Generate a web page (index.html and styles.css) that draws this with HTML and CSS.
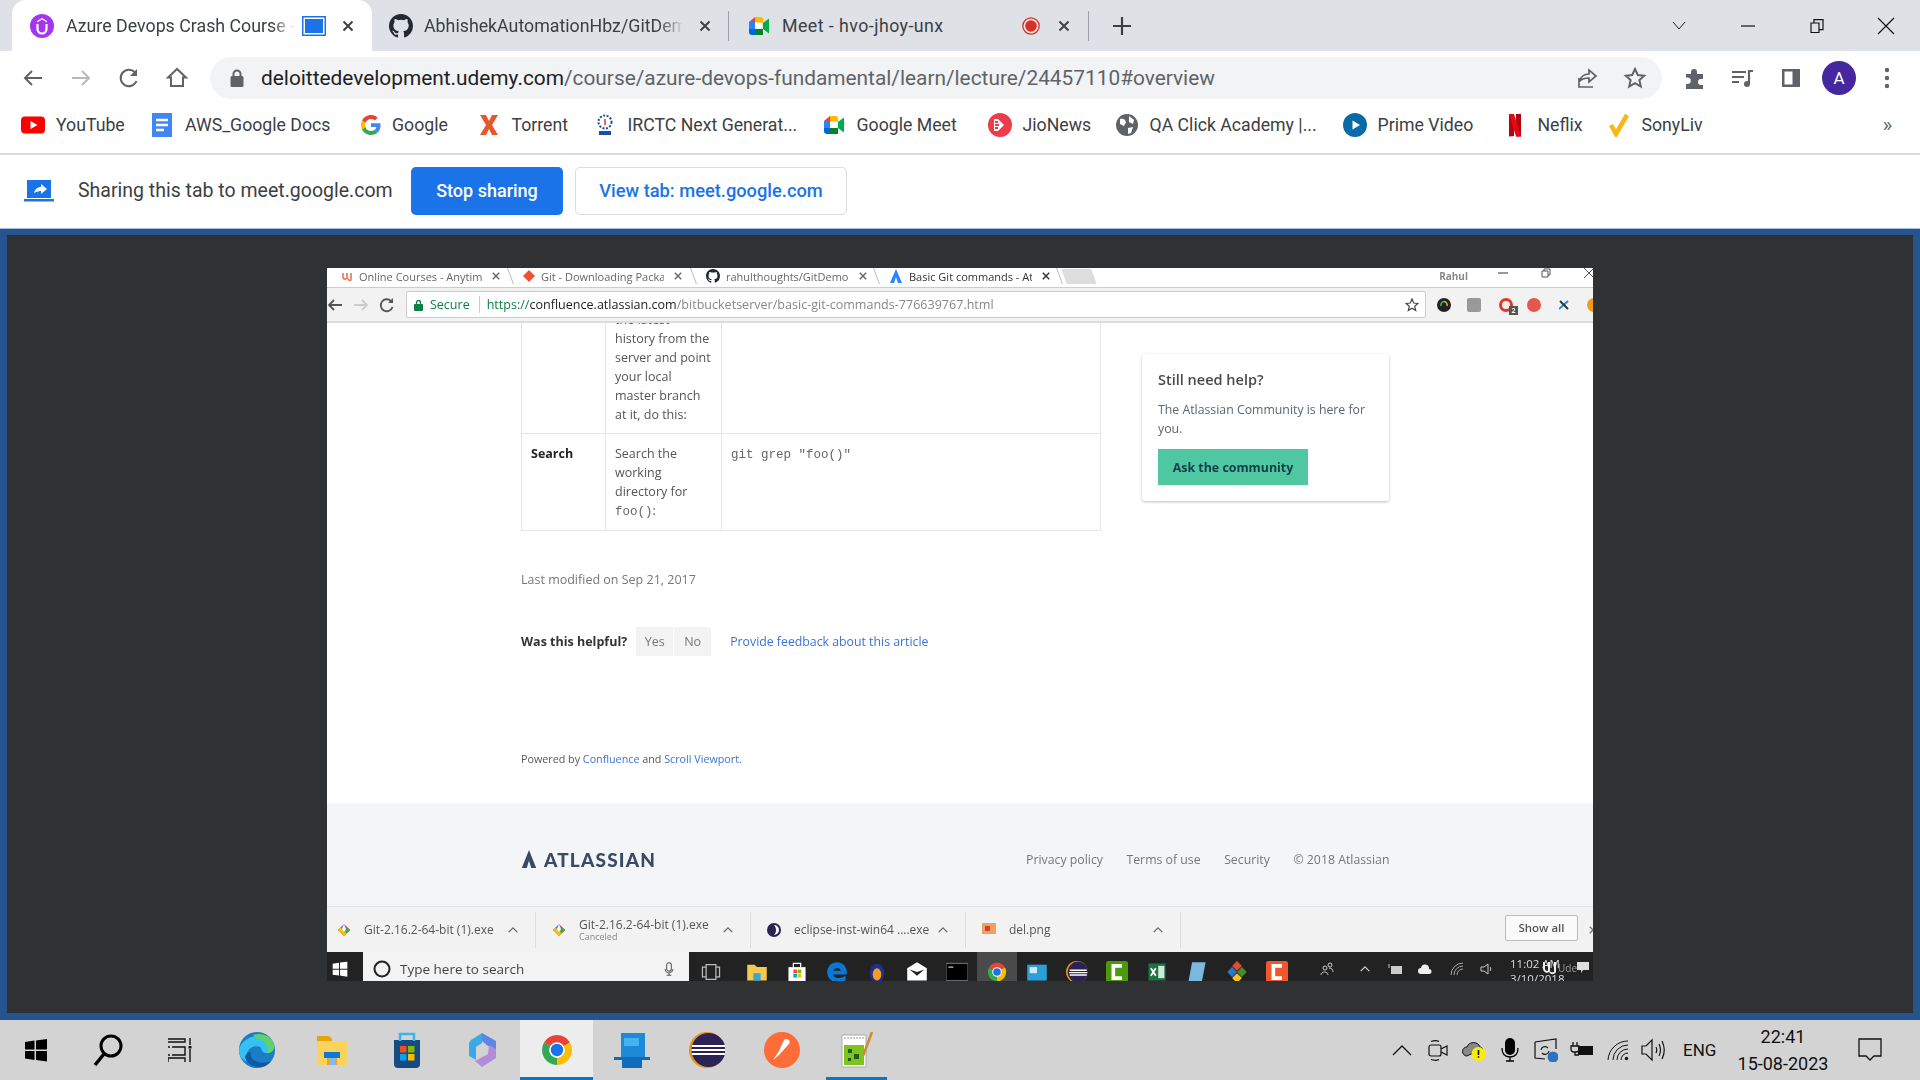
FILE: index.html
```html
<!DOCTYPE html>
<html lang="en">
<head>
<meta charset="utf-8">
<title>Azure Devops Crash Course</title>
<link rel="stylesheet" href="styles.css">
</head>
<body>
<svg class="defs" aria-hidden="true">
  <symbol id="meet" viewBox="0 0 24 24"><path fill="#00832d" d="M8 15h8v6H5l3-6z"/><path fill="#0066da" d="M2 8v10a3 3 0 0 0 3 3h3v-6H8L5 12z"/><path fill="#e94235" d="M8 3 2 8h6z"/><path fill="#2684fc" d="M2 8h6v7H2z"/><path fill="#ffba00" d="M8 3h6a2 2 0 0 1 2 2v4h-8z"/><path fill="#00ac47" d="m16 9 6-4.500v15L16 15z"/><path fill="#fff" d="M8 8.500h6.500v6H8z"/></symbol>
  <symbol id="github" viewBox="0 0 16 16"><path fill="#24292f" d="M8 0C3.580 0 0 3.580 0 8c0 3.540 2.290 6.530 5.470 7.590.4.070.55-.17.55-.38v-1.490c-2.010.37-2.530-.49-2.690-.94-.09-.23-.48-.94-.82-1.130-.28-.15-.68-.52-.01-.53.63-.01 1.080.58 1.230.82.720 1.210 1.870.87 2.330.66.070-.52.280-.87.510-1.070-1.780-.2-3.640-.89-3.640-3.950 0-.87.310-1.590.820-2.150-.08-.2-.36-1.020.08-2.120 0 0 .670-.21 2.200.82a7.600 7.600 0 0 1 4 0c1.530-1.040 2.200-.82 2.200-.82.440 1.100.160 1.920.080 2.120.510.560.820 1.270.820 2.150 0 3.070-1.870 3.750-3.650 3.950.290.250.540.730.540 1.480v2.200c0 .21.150.46.550.38A8 8 0 0 0 16 8c0-4.420-3.580-8-8-8z"/></symbol>
  <symbol id="chrome" viewBox="0 0 48 48"><path fill="#ea4335" d="M24 24 41.300 14A20 20 0 0 0 6.700 14z"/><path fill="#34a853" d="M24 24 6.700 14A20 20 0 0 0 24 44z"/><path fill="#fbbc04" d="M24 24V44A20 20 0 0 0 41.300 14z"/><circle cx="24" cy="24" r="10.500" fill="#fff"/><circle cx="24" cy="24" r="8.300" fill="#1a73e8"/></symbol>
  <symbol id="x" viewBox="0 0 14 14"><path fill="none" stroke="currentColor" stroke-width="2" d="m2.500 2.500 9 9m0-9-9 9"/></symbol>
  <symbol id="winlogo" viewBox="0 0 24 24"><path fill="currentColor" d="m1 4 9.500-1.400v8.900H1zm11-1.600L23 1v10.500H12zM1 13h9.500v8.900L1 20.500zm11 0h11v10.500l-11-1.600z"/></symbol>
  <symbol id="chev" viewBox="0 0 14 14"><path fill="none" stroke="currentColor" stroke-width="1.500" d="m2 9.500 5-5 5 5"/></symbol>
  <symbol id="gitlogo" viewBox="0 0 16 16"><path fill="#4285f4" d="M8 1 1 8l3 3z"/><path fill="#ea4335" d="m8 1 7 7-3 3z"/><path fill="#34a853" d="m12 5 3 3-7 7-3-3z"/><path fill="#fbbc04" d="M4 5 1 8l7 7 3-3z"/><path fill="#fff" d="M6.500 6.500h3v3h-3z"/></symbol>
</svg>

<div class="tabstrip">
  <div class="tab tab-active">
    <svg class="i24" viewBox="0 0 24 24"><circle cx="12" cy="12" r="12" fill="#a435f0"/><path fill="none" stroke="#fff" stroke-width="2.200" d="M7.500 10v5a4.500 4.500 0 0 0 9 0v-5"/><path fill="#fff" d="m12 4 5 3v1.500l-5-3-5 3V7z"/></svg>
    <span class="tab-title tt-a">Azure Devops Crash Course -</span>
    <svg class="tab-media" viewBox="0 0 24 20"><rect x=".75" y=".75" width="22.500" height="18.500" fill="#fff" stroke="#1a73e8" stroke-width="1.500"/><rect x="3" y="3" width="18" height="14" fill="#1a73e8"/></svg>
    <svg class="i14"><use href="#x"/></svg>
  </div>
  <div class="tab tab-b">
    <svg class="i24"><use href="#github"/></svg>
    <span class="tab-title tt-b">AbhishekAutomationHbz/GitDemo</span>
    <svg class="i14"><use href="#x"/></svg>
  </div>
  <i class="tab-sep"></i>
  <div class="tab tab-c">
    <svg class="i24"><use href="#meet"/></svg>
    <span class="tab-title tt-c">Meet - hvo-jhoy-unx</span>
    <svg class="i18" viewBox="0 0 18 18"><circle cx="9" cy="9" r="8.200" fill="none" stroke="#d93025" stroke-width="1.300"/><circle cx="9" cy="9" r="5.800" fill="#d93025"/></svg>
    <svg class="i14"><use href="#x"/></svg>
  </div>
  <i class="tab-sep"></i>
  <svg class="newtab" viewBox="0 0 20 20"><path fill="none" stroke="#3c4043" stroke-width="2.200" d="M10 1v18M1 10h18"/></svg>
  <div class="winctl">
    <span class="wc"><svg class="i14" viewBox="0 0 14 14"><path fill="none" stroke="#222" d="m1 3 6 7 6-7"/></svg></span>
    <span class="wc"><svg class="i14" viewBox="0 0 14 14"><path stroke="#111" stroke-width="1.200" d="M0 7h14"/></svg></span>
    <span class="wc"><svg class="i14" viewBox="0 0 14 14"><path fill="none" stroke="#111" stroke-width="1.200" d="M1 4h8v9.500H1zM4 4V.6h9v10H9"/></svg></span>
    <span class="wc"><svg class="i18" viewBox="0 0 18 18"><path fill="none" stroke="#111" stroke-width="1.200" d="m1 1 16 16m0-16L1 17"/></svg></span>
  </div>
</div>

<div class="toolbar">
  <span class="tb"><svg class="i24" viewBox="0 0 24 24"><path fill="none" stroke="#5f6368" stroke-width="2" d="M21 12H4m7-7-7 7 7 7"/></svg></span>
  <span class="tb"><svg class="i24" viewBox="0 0 24 24"><path fill="none" stroke="#b7b9bd" stroke-width="2" d="M3 12h17m-7-7 7 7-7 7"/></svg></span>
  <span class="tb"><svg class="i24" viewBox="0 0 24 24"><path fill="none" stroke="#5f6368" stroke-width="2" d="M19.500 15A8.200 8.200 0 1 1 18 6.500"/><path fill="#5f6368" d="M20 3v7h-7z"/></svg></span>
  <span class="tb"><svg class="i24" viewBox="0 0 24 24"><path fill="none" stroke="#5f6368" stroke-width="2" d="M12 3 3 11.500h3V20h12v-8.500h3z"/></svg></span>
  <div class="omni">
    <svg class="lock" viewBox="0 0 16 20"><path fill="none" stroke="#5f6368" stroke-width="2" d="M4.500 9V6a3.500 3.500 0 0 1 7 0v3"/><rect x="1.500" y="8" width="13" height="11" rx="1.500" fill="#5f6368"/></svg>
    <span class="url"><span class="url-host">deloittedevelopment.udemy.com</span>/course/azure-devops-fundamental/learn/lecture/24457110#overview</span>
    <span class="tb"><svg class="i24" viewBox="0 0 24 24"><path fill="none" stroke="#5f6368" stroke-width="1.700" d="M4 12v9h14M5 15c1-5 5-7 9-7V4l7 6-7 6v-4c-4 0-7 1-9 3z"/></svg></span>
    <span class="tb"><svg class="i24" viewBox="0 0 24 24"><path fill="none" stroke="#5f6368" stroke-width="2" d="m12 3 2.800 6 6.400.7-4.800 4.400 1.400 6.400L12 17.200l-5.800 3.300 1.400-6.400-4.800-4.400L9.200 9z"/></svg></span>
  </div>
  <div class="tb-right">
    <span class="tb"><svg class="i24" viewBox="0 0 24 24"><path fill="#5f6368" d="M3 8h5V6a3 3 0 0 1 6 0v2h6v5h-2a3 3 0 0 0 0 6h2v4H3v-5h1.500a3.200 3.200 0 0 0 0-6.400H3z"/></svg></span>
    <span class="tb"><svg class="i24" viewBox="0 0 24 24"><path fill="none" stroke="#5f6368" stroke-width="2.200" d="M1 6h14M1 11h12M1 16h7"/><circle cx="16" cy="18" r="3" fill="#5f6368"/><path fill="none" stroke="#5f6368" stroke-width="2.200" d="M18 18V5h4"/></svg></span>
    <span class="tb"><svg class="i24" viewBox="0 0 24 24"><rect x="3" y="3" width="18" height="18" fill="#5f6368"/><rect x="5.500" y="5.500" width="8" height="13" fill="#fff"/></svg></span>
    <span class="tb"><span class="avatar">A</span></span>
    <span class="tb"><svg class="i24" viewBox="0 0 24 24"><circle cx="12" cy="4" r="2.200" fill="#5f6368"/><circle cx="12" cy="12" r="2.200" fill="#5f6368"/><circle cx="12" cy="20" r="2.200" fill="#5f6368"/></svg></span>
  </div>
</div>

<div class="bookmarks">
  <a class="bm bm-1"><svg class="i24" viewBox="0 0 24 24"><rect y="3.500" width="24" height="17" rx="4" fill="#f00"/><path fill="#fff" d="m9.500 8 7 4-7 4z"/></svg>YouTube</a>
  <a class="bm bm-2"><svg class="i24" viewBox="0 0 24 24"><path fill="#4285f4" d="M2 0h20v24H2a1 1 0 0 1 0 0z"/><path stroke="#fff" stroke-width="2.400" d="M6 7h12M6 12h12M6 17h8"/></svg>AWS_Google Docs</a>
  <a class="bm bm-3"><svg class="i20" viewBox="0 0 48 48"><path fill="#ea4335" d="M24 9.500c3.500 0 6.700 1.200 9.200 3.600l6.800-6.800C35.900 2.400 30.500 0 24 0 14.600 0 6.500 5.400 2.600 13.200l8 6.200C12.400 13.700 17.700 9.500 24 9.500z"/><path fill="#4285f4" d="M46.900 24.500c0-1.600-.1-3.100-.4-4.500H24v9h12.900c-.6 3-2.200 5.500-4.800 7.200l7.700 6c4.500-4.200 7.100-10.300 7.100-17.700z"/><path fill="#fbbc05" d="M10.500 28.600A14.500 14.500 0 0 1 10.500 19.400l-8-6.200a24 24 0 0 0 0 21.600z"/><path fill="#34a853" d="M24 48c6.500 0 11.900-2.100 15.900-5.800l-7.700-6c-2.200 1.400-4.900 2.300-8.200 2.300-6.300 0-11.600-4.200-13.500-9.900l-8 6.200C6.500 42.600 14.600 48 24 48z"/></svg>Google</a>
  <a class="bm bm-4"><svg class="i24" viewBox="0 0 24 24"><path fill="#e8572a" d="M3 2h6l3 6 3-6h6l-6 10 6 10h-6l-3-6-3 6H3l6-10z"/></svg>Torrent</a>
  <a class="bm bm-5"><svg class="i24" viewBox="0 0 24 24"><circle cx="12" cy="9" r="6.500" fill="none" stroke="#1a4fa0" stroke-width="2" stroke-dasharray="2 1.500"/><path stroke="#d9342b" stroke-width="1.500" d="M12 6v6"/><path stroke="#1a4fa0" stroke-width="4" d="M6 20h12"/></svg>IRCTC Next Generat...</a>
  <a class="bm bm-6"><svg class="i24"><use href="#meet"/></svg>Google Meet</a>
  <a class="bm bm-7"><svg class="i24" viewBox="0 0 24 24"><circle cx="12" cy="12" r="12" fill="#ee3b4a"/><path fill="#fff" d="M6 6h4l6 6-6 6H6zM7 8v2h3V8zm0 3v2h4v-2zm0 3v2h3v-2z"/></svg>JioNews</a>
  <a class="bm bm-8"><svg class="i24" viewBox="0 0 24 24"><circle cx="12" cy="12" r="11" fill="#5f6368"/><path fill="#fff" d="M5 6c3-1 5 0 6 3l-2 4-4-2zm9-3 5 4-1 4-4-2zm-1 12 5-1-2 6-3 1z"/></svg>QA Click Academy |...</a>
  <a class="bm bm-9"><svg class="i24" viewBox="0 0 24 24"><circle cx="12" cy="12" r="12" fill="#0a6aa8"/><path fill="#fff" d="M9.500 7.500 17 12l-7.500 4.500z"/></svg>Prime Video</a>
  <a class="bm bm-10"><svg class="i24" viewBox="0 0 24 24"><path fill="#b1060f" d="M6 1h5v22l-5 .5zM13 1h5v22.500h-5z"/><path fill="#e50914" d="M6 1h5l7 22.500h-5z"/></svg>Neflix</a>
  <a class="bm"><svg class="i24" viewBox="0 0 24 24"><path fill="none" stroke="#f9b715" stroke-width="4.500" d="m4 12 5 9L20 2"/></svg>SonyLiv</a>
  <span class="bm-more">»</span>
</div>

<div class="infobar">
  <svg class="cast" viewBox="0 0 30 22"><path fill="#1a73e8" d="M3 0h24v18H3zM0 19h30v2.500H0z"/><path fill="#fff" d="M10 13c1-4 4-6 7-6V4l6 5-6 5v-3c-3 0-5 1-7 2z"/></svg>
  <span class="info-text">Sharing this tab to meet.google.com</span>
  <button class="btn-stop">Stop sharing</button>
  <button class="btn-view">View tab: meet.google.com</button>
</div>

<div class="stage">
  <div class="dark">
    <div class="video">
      <div class="v-tabs">
        <div class="vt">
          <svg class="v12" viewBox="0 0 12 12"><path fill="none" stroke="#e8836b" stroke-width="1.800" d="M2 3v4a2 2 0 0 0 4 0V3m1 5a2 2 0 0 0 3 2V3"/></svg>
          <span class="vt-title">Online Courses - Anytim</span>
          <svg class="v10"><use href="#x"/></svg>
        </div>
        <i class="vsep"></i>
        <div class="vt">
          <svg class="v12" viewBox="0 0 12 12"><path fill="#f05133" d="M6 0 12 6 6 12 0 6z"/></svg>
          <span class="vt-title">Git - Downloading Packa</span>
          <svg class="v10"><use href="#x"/></svg>
        </div>
        <i class="vsep"></i>
        <div class="vt">
          <svg class="v14"><use href="#github"/></svg>
          <span class="vt-title">rahulthoughts/GitDemo</span>
          <svg class="v10"><use href="#x"/></svg>
        </div>
        <i class="vsep"></i>
        <div class="vt vt-on">
          <svg class="v14" viewBox="0 0 14 14"><path fill="#2684ff" d="M7 0 13 14H9L7 8 5 14H1z"/></svg>
          <span class="vt-title">Basic Git commands - At</span>
          <svg class="v10"><use href="#x"/></svg>
        </div>
        <i class="vsep"></i>
        <i class="vnew"></i>
        <span class="v-user">Rahul</span>
        <span class="v-win"><svg class="v10" viewBox="0 0 10 10"><path stroke="#555" stroke-width="1.200" d="M0 5h10"/></svg></span>
        <span class="v-win"><svg class="v10" viewBox="0 0 10 10"><path fill="none" stroke="#555" d="M1 3h6v6H1zM3 3V1h6v6H7"/></svg></span>
        <span class="v-win"><svg class="v10" viewBox="0 0 10 10"><path stroke="#555" d="m0 0 10 10M10 0 0 10"/></svg></span>
      </div>
      <div class="v-bar">
        <svg class="v16" viewBox="0 0 16 16"><path fill="none" stroke="#555" stroke-width="1.800" d="M15 8H2m5-5L2 8l5 5"/></svg>
        <svg class="v16" viewBox="0 0 16 16"><path fill="none" stroke="#ccc" stroke-width="1.800" d="M1 8h13M9 3l5 5-5 5"/></svg>
        <svg class="v16" viewBox="0 0 16 16"><path fill="none" stroke="#555" stroke-width="1.800" d="M13.500 10A6 6 0 1 1 12 4"/><path fill="#555" d="M14 1v5H9z"/></svg>
        <div class="v-omni">
          <svg class="v-lock" viewBox="0 0 9 12"><path fill="none" stroke="#0b8043" stroke-width="1.300" d="M2.500 6V3.500a2 2 0 0 1 4 0V6"/><rect y="5" width="9" height="7" rx="1" fill="#0b8043"/></svg>
          <span class="v-secure">Secure</span>
          <span class="v-url"><span class="v-https">https://</span><span class="v-host">confluence.atlassian.com</span>/bitbucketserver/basic-git-commands-776639767.html</span>
          <svg class="v14" viewBox="0 0 14 14"><path fill="none" stroke="#444" stroke-width="1.200" d="m7 1 1.700 4 4.300.4-3.300 2.900 1 4.200L7 10.300l-3.700 2.200 1-4.200L1 5.400 5.300 5z"/></svg>
        </div>
        <div class="v-exts">
          <span class="ve"><svg class="v14" viewBox="0 0 14 14"><circle cx="7" cy="7" r="7" fill="#222"/><path fill="none" stroke="#3bbf6a" stroke-width="1.500" d="M4 8a3.500 3.500 0 0 1 3-4.500"/><path fill="none" stroke="#e2b93b" stroke-width="1.500" d="M7 3.500A3.500 3.500 0 0 1 10 8"/></svg></span>
          <span class="ve"><i class="ext ext-sq"></i></span>
          <span class="ve"><i class="ext ext-op"></i><b class="badge">2</b></span>
          <span class="ve"><i class="ext ext-red"></i></span>
          <span class="ve"><svg class="v10" viewBox="0 0 10 10"><path stroke="#1a8fe0" stroke-width="2" d="M0 9 9 1"/><path stroke="#333" stroke-width="2" d="m1 1 8 8"/></svg></span>
          <span class="ve"><i class="ext ext-or"></i></span>
        </div>
      </div>
      <div class="v-page">
        <div class="v-main">
          <div class="tbl">
            <div class="cell cell-top"></div>
            <div class="cell cell-top cell-clip">the latest<br>history from the<br>server and point<br>your local<br>master branch<br>at it, do this:</div>
            <div class="cell cell-top cell-last"></div>
            <div class="cell cell-bot cell-head">Search</div>
            <div class="cell cell-bot">Search the<br>working<br>directory for<br><code class="code">foo()</code>:</div>
            <div class="cell cell-bot cell-last"><code class="code">git grep "foo()"</code></div>
          </div>
          <p class="mod">Last modified on Sep 21, 2017</p>
          <div class="helpful">
            <b class="help-q">Was this helpful?</b>
            <span class="yn">Yes</span><span class="yn">No</span>
            <a class="help-link">Provide feedback about this article</a>
          </div>
          <p class="powered">Powered by <a class="lnk">Confluence</a> and <a class="lnk">Scroll Viewport.</a></p>
        </div>
        <aside class="card">
          <h3 class="card-h">Still need help?</h3>
          <p class="card-p">The Atlassian Community is here for you.</p>
          <button class="card-btn">Ask the community</button>
        </aside>
      </div>
      <div class="v-foot">
        <div class="logo">
          <svg class="logo-i" viewBox="0 0 16 20"><path fill="#3a4a66" d="M8 0 16 20H10.500L8 12l-2.500 8H0z"/></svg>
          <span>ATLASSIAN</span>
        </div>
        <div class="foot-links"><span>Privacy policy</span><span>Terms of use</span><span>Security</span><span>© 2018 Atlassian</span></div>
      </div>
      <div class="v-shelf">
        <div class="dl dl-first"><svg class="v14"><use href="#gitlogo"/></svg><span class="dl-name">Git-2.16.2-64-bit (1).exe</span><svg class="v12 dl-chev"><use href="#chev"/></svg></div>
        <div class="dl"><svg class="v14"><use href="#gitlogo"/></svg><span class="dl-name dl-two">Git-2.16.2-64-bit (1).exe<small class="dl-sub">Canceled</small></span><svg class="v12 dl-chev"><use href="#chev"/></svg></div>
        <div class="dl"><svg class="v14" viewBox="0 0 14 14"><circle cx="7" cy="7" r="7" fill="#2c2255"/><path fill="#fff" d="M7 2a5 5 0 0 1 0 10 7 7 0 0 0 0-10z"/></svg><span class="dl-name">eclipse-inst-win64 ....exe</span><svg class="v12 dl-chev"><use href="#chev"/></svg></div>
        <div class="dl"><svg class="v14" viewBox="0 0 14 14"><rect width="14" height="11" fill="#f0a060"/><path fill="#c8452a" d="M3 3h5v5H3z"/></svg><span class="dl-name">del.png</span><svg class="v12 dl-chev"><use href="#chev"/></svg></div>
        <button class="show-all">Show all</button>
        <svg class="v10 dl-x"><use href="#x"/></svg>
      </div>
      <div class="v-task">
        <span class="vw"><svg class="v16 c-white"><use href="#winlogo"/></svg></span>
        <div class="v-search">
          <svg class="v18" viewBox="0 0 18 18"><circle cx="9" cy="9" r="7.500" fill="none" stroke="#222" stroke-width="2"/></svg>
          <span class="v-search-t">Type here to search</span>
          <svg class="v14" viewBox="0 0 14 18"><rect x="4" y="1" width="6" height="11" rx="3" fill="none" stroke="#555" stroke-width="1.300"/><path fill="none" stroke="#555" stroke-width="1.300" d="M2 9a5 5 0 0 0 10 0M7 14v3M4 17h6"/></svg>
        </div>
        <span class="vi vi-tv"><svg viewBox="0 0 18 18"><path fill="none" stroke="#bbb" d="M5 3h8v12H5zM5 5H2v8h3M13 5h3v8h-3"/></svg></span>
        <span class="vi"><svg viewBox="0 0 18 18"><path fill="#f5c94e" d="M1 3h6l2 2h8v11H1z"/><path fill="#3ba4d8" d="M6 10h6v6H6z"/></svg></span>
        <span class="vi"><svg viewBox="0 0 18 18"><path fill="#fff" d="M2 5h14v12H2z"/><path fill="#f25022" d="M6 7h3v3H6z"/><path fill="#7fba00" d="M9.500 7h3v3h-3z"/><path fill="#00a4ef" d="M6 10.500h3v3H6z"/><path fill="#ffb900" d="M9.500 10.500h3v3h-3z"/><path fill="none" stroke="#fff" d="M6 5V2h6v3"/></svg></span>
        <span class="vi"><svg viewBox="0 0 18 18"><path fill="#0a78d7" d="M1 9C1 4 5 1 9 1s8 3 8 8v2H6c0 3 5 4 10 1v4c-7 3-15 1-15-7zm5-1h6c0-3-5-3-6 0z"/></svg></span>
        <span class="vi"><svg viewBox="0 0 18 18"><ellipse cx="9" cy="10" rx="6" ry="8" fill="#1e2f8c"/><ellipse cx="9" cy="11" rx="3.500" ry="5" fill="#f59b1d"/></svg></span>
        <span class="vi"><svg viewBox="0 0 18 18"><path fill="#fff" d="M1 6 9 1l8 5v10H1z"/><path fill="#222" d="m3 7 6 2 6-2-6 5z"/></svg></span>
        <span class="vi"><svg viewBox="0 0 18 18"><rect y="2" width="18" height="14" fill="#000" stroke="#666"/><path stroke="#ccc" d="M2 5h4"/></svg></span>
        <span class="vi vi-on"><svg><use href="#chrome"/></svg></span>
        <span class="vi"><svg viewBox="0 0 18 18"><rect x="1" y="3" width="16" height="13" fill="#2a9fd8"/><rect x="3" y="5" width="6" height="5" fill="#cfeafa"/></svg></span>
        <span class="vi"><svg viewBox="0 0 18 18"><circle cx="9" cy="9" r="9" fill="#e8941a"/><circle cx="9.800" cy="9" r="8.500" fill="#2c2255"/><path stroke="#fff" stroke-width="1.200" d="M3 7.500h14M2.500 9.500h15M3 11.500h14"/></svg></span>
        <span class="vi"><svg viewBox="0 0 18 18"><rect width="18" height="18" rx="2" fill="#4a9a0c"/><path fill="none" stroke="#fff" stroke-width="3" d="M13 4H6v10h7"/></svg></span>
        <span class="vi"><svg viewBox="0 0 18 18"><rect x="2" y="2" width="14" height="14" fill="#1f7244"/><rect x="10" y="4" width="5" height="10" fill="#cfe8d8"/><path stroke="#fff" stroke-width="1.500" d="m4 6 4 6m0-6-4 6"/></svg></span>
        <span class="vi"><svg viewBox="0 0 18 18"><path fill="#7ab8e0" d="M5 1h11l-3 16H2z"/></svg></span>
        <span class="vi"><svg viewBox="0 0 18 18"><path fill="#e04e39" d="M9 0 13 4 9 8 5 4z"/><path fill="#4b8b2b" d="m13 5 4 4-4 4-4-4z"/><path fill="#2979c9" d="m5 5 4 4-4 4-4-4z"/><path fill="#f5c518" d="m9 10 4 4-4 4-4-4z"/></svg></span>
        <span class="vi"><svg viewBox="0 0 18 18"><rect width="18" height="18" rx="2" fill="#f0572d"/><path fill="none" stroke="#fff" stroke-width="3" d="M13 4H6v10h7"/></svg></span>
        <span class="vt-c vt-c-1"><svg class="v14" viewBox="0 0 14 14"><circle cx="5" cy="6" r="2" fill="none" stroke="#ccc"/><circle cx="10" cy="3" r="2" fill="none" stroke="#ccc"/><path fill="none" stroke="#ccc" d="M1 13c0-4 7-4 7 0M9 6c3 0 4 2 4 4"/></svg></span>
        <span class="vt-c vt-c-2"><svg class="v12 c-grey"><use href="#chev"/></svg></span>
        <span class="vt-c"><svg class="v14" viewBox="0 0 14 14"><rect x="3" y="4" width="11" height="8" fill="#ccc"/><path stroke="#ccc" d="M1 2v4"/></svg></span>
        <span class="vt-c"><svg class="v14" viewBox="0 0 14 14"><path fill="#eee" d="M3 12a3 3 0 0 1 0-6 4 4 0 0 1 8 1 2.500 2.500 0 0 1 0 5z"/></svg></span>
        <span class="vt-c vt-c-3"><svg class="v14" viewBox="0 0 14 14"><path fill="none" stroke="#aaa" d="M1 13A12 12 0 0 1 13 1M4 13a9 9 0 0 1 9-9M7 13a6 6 0 0 1 6-6"/></svg></span>
        <span class="vt-c"><svg class="v14" viewBox="0 0 14 14"><path fill="none" stroke="#ccc" d="M1 5h3l4-3v10L4 9H1zM10 5c1 1 1 3 0 4"/></svg></span>
        <span class="v-clock">11:02 AM<br>3/10/2018</span>
        <span class="v-wm"><svg class="v14" viewBox="0 0 14 14"><path fill="none" stroke="#eee" stroke-width="2" d="M2 1v7a3 3 0 0 0 5 2V1m1 10a3 3 0 0 0 5 0V1"/></svg>Ude</span>
        <span class="v-note"><svg class="v14" viewBox="0 0 14 14"><path fill="#ddd" d="M1 2h12v8H7l-2 3v-3H1z"/></svg></span>
      </div>
    </div>
  </div>
</div>

<div class="taskbar">
  <span class="tk tk-s"><svg class="i24 c-black"><use href="#winlogo"/></svg></span>
  <span class="tk tk-s"><svg class="i34" viewBox="0 0 34 34"><circle cx="20" cy="13" r="10" fill="none" stroke="#000" stroke-width="3"/><path stroke="#000" stroke-width="3.500" d="m13 21-9 11"/></svg></span>
  <span class="tk tk-s"><svg class="i24" viewBox="0 0 24 24"><path fill="none" stroke="#111" stroke-width="1.400" d="M0 1h17v3H0M4 9h13v8H4M0 9h2m-2 8h2M0 24v-4h17v4M22 0v7m0 4v13"/><rect x="20.500" y="8" width="3" height="2.500" fill="#111"/></svg></span>
  <span class="tk tk-edge"><svg class="i36" viewBox="0 0 36 36"><circle cx="18" cy="18" r="18" fill="#1b7cc8"/><path fill="#35c1f1" d="M0 18C2 4 30-4 35 13c1 6-4 8-8 8-5 0-4-5-6-6C12 11 4 22 8 30 2 27 0 23 0 18z"/><path fill="#5fd36a" d="M14 3c9-3 19 1 21 10 1 6-4 9-8 8 3-1 2-9-3-12-4-2-7-3-10-6z"/><path fill="#0c59a4" d="M6 25c2 8 12 12 20 9 2-1 5-3 6-5-4 2-12 3-17-1-3-2-4-5-3-8-3 0-5 2-6 5z"/></svg></span>
  <span class="tk"><svg class="i36" viewBox="0 0 36 36"><path fill="#e5a50a" d="M3 4h12l3 3v5H3z"/><path fill="#fbd35a" d="M3 9h30v24H3z"/><path fill="#0f78d4" d="M10 20h16v6H10z"/><path fill="#f0a030" d="M13 26h10v7H13z"/><path fill="#7fbce8" d="M15 26h6v7h-6z"/></svg></span>
  <span class="tk"><svg class="i36" viewBox="0 0 36 36"><path fill="#164a85" d="M5 8h26v24a4 4 0 0 1-4 4H9a4 4 0 0 1-4-4z"/><path fill="none" stroke="#3cb4e8" stroke-width="2.500" d="M11 9V2h14v7"/><path fill="#f25022" d="M11 14h6.500v6.500H11z"/><path fill="#7fba00" d="M19 14h6.500v6.500H19z"/><path fill="#00a4ef" d="M11 22h6.500v6.500H11z"/><path fill="#ffb900" d="M19 22h6.500v6.500H19z"/></svg></span>
  <span class="tk"><svg class="i36" viewBox="0 0 36 36"><path fill="#5d86e0" d="M18 1 32 9v9l-8-4-6-5z"/><path fill="#3ba8e8" d="M7 8 18 1v10l-6 4v13l-7-4V11z"/><path fill="#b28bd9" d="M32 17v9l-14 9-7-6 13-7 1-9z"/></svg></span>
  <span class="tk tk-on"><svg class="i36"><use href="#chrome"/></svg></span>
  <span class="tk"><svg class="i36" viewBox="0 0 36 36"><path fill="#1e88d9" d="M7 1h24v24H7z"/><path fill="#43b4f0" d="M10 6h15v8H10z"/><path fill="#0f6cbd" d="M0 25h36v3H0zM8 28h20v8H8z"/></svg></span>
  <span class="tk"><svg class="i36" viewBox="0 0 36 36"><circle cx="18" cy="18" r="18" fill="#e8941a"/><circle cx="19.500" cy="18" r="17" fill="#2c2255"/><path stroke="#fff" stroke-width="2" d="M3 14h33M2.500 18h34M3 22h33"/></svg></span>
  <span class="tk"><svg class="i36" viewBox="0 0 36 36"><circle cx="18" cy="18" r="18" fill="#ff6c37"/><path fill="#fff" d="M22 7c4 0 5 4 2 6l-9 10-6 5 6-9 4-9c1-2 2-3 3-3z"/></svg></span>
  <span class="tk tk-note"><svg class="i36" viewBox="0 0 36 36"><path fill="#fff" stroke="#aaa" d="M3 3h24v32H3z"/><path fill="#7fc31c" d="M5 13h20v20H5z"/><path fill="#1e5a22" d="M9 17h4v4H9zm6 5h5v5h-5zM9 26h3v3H9z"/><path stroke="#c88f2c" stroke-width="2.500" d="M33 0 24 24"/><path stroke="#999" stroke-dasharray="2 1" d="M5 6h20"/></svg></span>
  <div class="tray">
    <span class="tc"><svg class="i24" viewBox="0 0 24 24"><path fill="none" stroke="#111" stroke-width="1.300" d="m3 17 9-9 9 9"/></svg></span>
    <span class="tc"><svg class="i24" viewBox="0 0 24 24"><rect x="3" y="7" width="12" height="11" rx="2" fill="none" stroke="#111" stroke-width="1.200"/><path fill="none" stroke="#111" stroke-width="1.200" d="m15 11 6-3v9l-6-3M5 3.500c3-1 6-1 8 0M5 21.500c3 1 6 1 8 0"/></svg></span>
    <span class="tc"><svg class="i24" viewBox="0 0 24 24"><path fill="#888" stroke="#111" d="M5 18a4.500 4.500 0 0 1 0-9 7 7 0 0 1 13 0 4 4 0 0 1 2 7H9z"/><circle cx="16.500" cy="16" r="7" fill="#fdee00"/><path stroke="#111" stroke-width="1.600" d="M16.500 12v5m0 1.200v1.500"/></svg></span>
    <span class="tc"><svg class="i24" viewBox="0 0 24 24"><rect x="7" y="0" width="10" height="17" rx="5" fill="#000"/><path fill="none" stroke="#000" stroke-width="1.300" d="M4 10c0 6 3 9 8 9s8-3 8-9M12 19v4M8 23h8"/></svg></span>
    <span class="tc"><svg class="i24" viewBox="0 0 24 24"><path fill="none" stroke="#111" stroke-width="1.200" d="M1 4 22 1v10M1 4v16l10 1"/><path fill="none" stroke="#111" stroke-width="1.200" d="M7 12a4 4 0 0 1 7-2m1 3a4 4 0 0 1-7 2"/><circle cx="19" cy="19" r="5.500" fill="#2c72c0"/></svg></span>
    <span class="tc"><svg class="i24" viewBox="0 0 24 24"><path fill="none" stroke="#111" stroke-width="1.300" d="M3 4v4m4-4v4M1 8h8v3a3 3 0 0 1-3 3H4a3 3 0 0 1-3-3zM5 14v3h4"/><rect x="8" y="8" width="15" height="9" fill="#111"/></svg></span>
    <span class="tc tc-w"><svg class="i24" viewBox="0 0 24 24"><path fill="none" stroke="#111" d="M1 22A20 20 0 0 1 21 3M6 22A15 15 0 0 1 21 7M10 22a11 11 0 0 1 11-11M14 22a7 7 0 0 1 7-7"/><circle cx="19.500" cy="20.500" r="1.700" fill="#111"/></svg></span>
    <span class="tc tc-v"><svg class="i24" viewBox="0 0 24 24"><path fill="none" stroke="#111" stroke-width="1.200" d="M1 8h4l6-6v20l-6-6H1zM15 9c1 2 1 4 0 6M18 6c2 4 2 8 0 12M21 3c3 6 3 12 0 18"/></svg></span>
    <span class="eng">ENG</span>
    <span class="clock">22:41<br>15-08-2023</span>
    <span class="tc tc-n"><svg class="i24" viewBox="0 0 24 24"><path fill="none" stroke="#111" stroke-width="1.300" d="M1 1h22v17h-7l-4 4-4-4H1z"/></svg></span>
  </div>
</div>
</body>
</html>
```
FILE: styles.css
```css
* { box-sizing: border-box; }
html, body { margin: 0; padding: 0; }
body {
  width: 1920px; height: 1080px; overflow: hidden;
  display: flex; flex-direction: column;
  font-family: Roboto, "Liberation Sans", sans-serif;
  color: #3c4043; background: #fff;
}
.defs { width: 0; height: 0; display: block; flex: none; }
svg { flex: none; display: block; }
.i14 { width: 14px; height: 14px; }
.i18 { width: 18px; height: 18px; }
.i20 { width: 20px; height: 20px; }
.i24 { width: 24px; height: 24px; }
.i34 { width: 34px; height: 34px; }
.i36 { width: 36px; height: 36px; }
.v10 { width: 10px; height: 10px; }
.v12 { width: 12px; height: 12px; }
.v14 { width: 14px; height: 14px; }
.v16 { width: 16px; height: 16px; }
.v18 { width: 18px; height: 18px; }

/* tab strip */
.tabstrip { height: 51px; flex: none; background: #dee1e6; display: flex; align-items: center; }
.tab { height: 51px; display: flex; align-items: center; flex: none; }
.tab-active { width: 360px; margin-left: 12px; padding: 0 17px 0 18px; background: #fff; border-radius: 14px 14px 0 0; }
.tab-b { width: 356px; padding: 0 16px 0 17px; }
.tab-c { width: 359px; padding: 0 17px 0 18px; }
.tab-title { font-size: 17.8px; white-space: nowrap; overflow: hidden; }
.tt-a { width: 230px; margin-left: 12px; -webkit-mask-image: linear-gradient(90deg, #000 90%, transparent); mask-image: linear-gradient(90deg, #000 90%, transparent); }
.tt-b { width: 261px; margin-left: 11px; -webkit-mask-image: linear-gradient(90deg, #000 90%, transparent); mask-image: linear-gradient(90deg, #000 90%, transparent); }
.tt-c { width: 240px; margin-left: 11px; letter-spacing: .45px; }
.tab-media { width: 24px; height: 20px; margin-left: 7px; margin-right: 15px; }
.tab-b .i14 { margin-left: 14px; }
.tab-c .i18 { margin-right: 17px; margin-left: 15px; }
.tab-sep { width: 1px; height: 30px; background: #9aa0a6; flex: none; }
.newtab { width: 20px; height: 20px; margin-left: 23px; }
.winctl { margin-left: auto; display: flex; color: #111; }
.wc { width: 68.75px; height: 44px; display: flex; align-items: center; justify-content: center; }

/* toolbar */
.toolbar { height: 54px; flex: none; display: flex; align-items: flex-start; padding: 6px 0 0 9px; background: #fff; }
.tb { width: 48px; height: 42px; flex: none; display: flex; align-items: center; justify-content: center; }
.omni { width: 1452px; height: 42px; margin-left: 9px; background: #f1f3f4; border-radius: 21px; display: flex; align-items: center; padding: 0 3px 0 19px; flex: none; }
.lock { width: 16px; height: 20px; margin-right: 16px; }
.url { flex: 1; font-size: 20.85px; color: #5f6368; white-space: nowrap; overflow: hidden; }
.url-host { color: #202124; }
.tb-right { display: flex; margin-left: 9px; }
.avatar { width: 34px; height: 34px; border-radius: 50%; background: #4527a0; color: #fff; font-size: 17px; display: flex; align-items: center; justify-content: center; }

/* bookmarks */
.bookmarks { height: 50px; flex: none; display: flex; align-items: center; padding: 0 0 8px 21px; border-bottom: 2px solid #dadce0; font-size: 17.7px; color: #3c4043; }
.bm { display: flex; align-items: center; gap: 11px; white-space: nowrap; flex: none; }
.bm-1 { width: 129px; }
.bm-2 { width: 211px; }
.bm-3 { width: 115.5px; }
.bm-4 { width: 116px; }
.bm-5 { width: 229px; }
.bm-6 { width: 166px; }
.bm-7 { width: 127px; }
.bm-8 { width: 228px; }
.bm-9 { width: 160px; }
.bm-10 { width: 104px; }
.bm-more { margin-left: auto; margin-right: 28px; font-size: 20px; color: #5f6368; }

/* infobar */
.infobar { height: 73px; flex: none; display: flex; align-items: center; padding: 0 0 2px 24px; }
.cast { width: 30px; height: 22px; margin-right: 24px; }
.info-text { width: 333px; font-size: 19.5px; color: #3c4043; white-space: nowrap; }
.btn-stop, .btn-view { font-family: inherit; font-size: 18px; font-weight: 500; height: 48px; border-radius: 5px; }
.btn-stop { width: 152px; background: #1a73e8; color: #fff; border: 0; }
.btn-view { width: 272px; margin-left: 12px; background: #fff; color: #1a73e8; border: 1px solid #dadce0; font-size: 18.3px; }

/* shared screen */
.stage { height: 792px; flex: none; background: #26548f; padding: 6px 7px 7px; border-top: 1px solid #a9c0dc; }
.dark { height: 778px; background: #303132; padding: 33px 0 0 320px; }
.video { width: 1266px; height: 713px; display: flex; flex-direction: column; overflow: hidden; background: #fff; filter: blur(.7px); font-family: "Open Sans", sans-serif; color: #555; }
.v-tabs { height: 20px; flex: none; display: flex; align-items: center; padding-bottom: 3px; border-bottom: 1px solid #ccc; background: #fff; font-size: 11px; color: #666; }
.vt { width: 182px; height: 100%; flex: none; display: flex; align-items: center; padding-left: 12px; overflow: hidden; }
.vt:first-child { width: 183px; padding-left: 14px; }
.vt-title { width: 123px; margin-left: 6px; margin-right: 9px; white-space: nowrap; overflow: hidden; }
.vt-on { color: #333; }
.vsep { width: 1px; height: 100%; background: #bbb; transform: skewX(20deg); flex: none; }
.vnew { width: 30px; height: 15px; background: #ddd; transform: skewX(20deg); margin-left: 4px; flex: none; }
.v-user { margin-left: auto; font-size: 10px; font-weight: 700; color: #888; margin-right: 13px; }
.v-win { width: 43px; display: flex; justify-content: center; padding-bottom: 6px; }
.v-win:last-child { margin-right: -17px; }
.v-bar { height: 35px; flex: none; display: flex; align-items: center; gap: 10px; background: #f2f2f2; border-bottom: 2px solid #ddd; }
.v-omni { width: 1020px; height: 27px; margin-left: 1px; background: #fff; border: 1px solid #ccc; border-radius: 2px; display: flex; align-items: center; padding: 0 6px 0 7px; flex: none; }
.v-lock { width: 9px; height: 12px; margin-right: 7px; }
.v-secure { font-size: 12.5px; color: #0b8043; padding-right: 9px; border-right: 1px solid #ccc; margin-right: 7px; }
.v-url { flex: 1; font-size: 12.55px; color: #888; white-space: nowrap; }
.v-https { color: #0b8043; }
.v-host { color: #222; }
.v-exts { display: flex; margin-left: -7px; }
.ve { width: 30px; display: flex; justify-content: center; align-items: center; }
.ext { width: 14px; height: 14px; display: block; border-radius: 50%; flex: none; }
.ext-sq { background: #999; border-radius: 2px; }
.ext-op { border: 3px solid #e03a2f; }
.ext-red { background: #e4574c; }
.ext-or { background: #f39a1e; }
.badge { width: 9px; height: 9px; margin: 11px -9px 0 -4px; background: #555; color: #fff; font: 700 7px/9px "Open Sans", sans-serif; text-align: center; flex: none; }

.v-page { height: 480px; flex: none; display: flex; padding-left: 194px; font-size: 12.5px; overflow: hidden; }
.v-main { width: 580px; flex: none; }
.tbl { display: grid; grid-template-columns: 84px 116px 1fr; grid-template-rows: 111px 96px; width: 580px; border: solid #e6e6e6; border-width: 0 1px 1px; line-height: 19px; font-size: 12.5px; color: #555; }
.cell { border-right: 1px solid #e6e6e6; padding: 10px 9px 6px; }
.cell-last { border-right: 0; }
.cell-top { border-bottom: 1px solid #e6e6e6; }
.cell-clip { overflow: hidden; padding-top: 0; margin-top: -13px; }
.cell-head { font-weight: 700; color: #222; }
.code { font-family: "Liberation Mono", monospace; font-size: 12.5px; color: #666; }
.mod { margin: 40px 0 0; height: 18px; line-height: 18px; color: #777; }
.helpful { margin-top: 38px; height: 29px; display: flex; align-items: center; }
.help-q { color: #333; margin-right: 9px; }
.yn { height: 29px; line-height: 29px; width: 37px; text-align: center; background: #f3f3f3; margin-right: 1px; color: #777; }
.help-link { margin-left: 18px; color: #3b73d6; font-size: 12.3px; }
.powered { margin: 94px 0 0; height: 18px; line-height: 18px; font-size: 10.75px; color: #555; }
.lnk { color: #3b73d6; }
.card { width: 247px; height: 147px; margin: 31px 0 0 41px; padding: 17px 16px; border-radius: 3px; box-shadow: 0 1px 3px rgba(0,0,0,.25); flex: none; background: #fff; }
.card-h { margin: 0; font-size: 14.5px; line-height: 18px; font-weight: 600; color: #4a4a4a; }
.card-p { margin: 11px 0 11px; font-size: 12.3px; line-height: 19px; color: #5c6478; }
.card-btn { width: 150px; height: 36px; border: 0; background: #4fc7a1; color: #123c4a; font: 700 12.4px "Open Sans", sans-serif; }

.v-foot { height: 103px; flex: none; background: #f4f5f7; display: flex; align-items: center; padding: 9px 0 0 194px; }
.logo { width: 505px; display: flex; align-items: center; gap: 7px; font: 900 19px Lato, sans-serif; letter-spacing: 1.200px; color: #3a4a66; }
.logo-i { width: 16px; height: 18px; }
.foot-links { display: flex; gap: 23.5px; font-size: 12.3px; color: #777; }

.v-shelf { height: 46px; flex: none; display: flex; align-items: center; background: #f2f2f2; border-top: 1px solid #e4e4e4; font-size: 12px; color: #555; }
.dl { width: 215px; height: 36px; flex: none; display: flex; align-items: center; padding: 0 16px 0 16px; border-right: 1px solid #ddd; }
.dl-first { width: 209px; padding-left: 10px; }
.dl-name { margin-left: 13px; white-space: nowrap; }
.dl-two { line-height: 15px; }
.dl-sub { display: block; font-size: 9px; line-height: 10px; color: #888; }
.dl-chev { margin-left: auto; color: #666; }
.show-all { width: 73px; height: 26px; margin: 0 10px 4px auto; background: #fafafa; border: 1px solid #bbb; border-radius: 2px; font: 600 11.5px "Open Sans", sans-serif; color: #555; padding: 0; }
.dl-x { color: #777; margin-right: -5px; }

.v-task { height: 29px; flex: none; display: flex; background: #222; overflow: hidden; }
.c-white { color: #fff; }
.c-grey { color: #ccc; }
.c-black { color: #000; }
.vw { width: 36px; flex: none; display: flex; align-items: center; padding: 5px 0 0 5px; }
.v-search { width: 326px; flex: none; background: #f3f3f3; display: flex; align-items: center; padding: 5px 13px 0 10px; color: #444; font-size: 13.5px; }
.v-search-t { flex: 1; margin-left: 9px; white-space: nowrap; }
.vi { width: 40px; flex: none; display: flex; align-items: flex-start; justify-content: center; padding-top: 9px; }
.vi svg { width: 22px; height: 22px; }
.vi-tv { margin-left: 2px; margin-right: 6px; }
.vi-on { background: #4a4a4a; }
.vt-c { width: 30px; flex: none; display: flex; align-items: center; justify-content: center; padding-top: 4px; }
.vt-c-1 { margin-left: 15px; }
.vt-c-2 { margin-left: 8px; }
.vt-c-3 { margin-left: 2px; }
.v-clock { width: 32px; margin-left: 8px; padding-top: 4px; font-size: 11.5px; line-height: 15px; color: #ddd; white-space: nowrap; flex: none; }
.v-wm { width: 34px; flex: none; display: flex; align-items: center; gap: 2px; padding-top: 2px; font-size: 10px; color: #999; }
.v-note { width: 30px; flex: none; padding-top: 8px; }

/* windows taskbar */
.taskbar { height: 60px; flex: none; background: #d3d3d3; display: flex; align-items: center; }
.tk { width: 75px; height: 60px; flex: none; display: flex; align-items: center; justify-content: center; }
.tk-s { width: 72px; }
.tk-edge { margin-left: 3px; }
.tk-on { background: linear-gradient(#0078d4, #0078d4) no-repeat center bottom / 73px 3px, linear-gradient(#ededed, #ededed) no-repeat center / 73px 100%; }
.tk-note { background: linear-gradient(#0078d4, #0078d4) no-repeat bottom / 61px 3px; }
.tray { margin-left: auto; display: flex; align-items: center; color: #111; }
.tc { width: 36px; height: 60px; display: flex; align-items: center; justify-content: center; flex: none; }
.tc-w { width: 38px; }
.tc-v { width: 30px; }
.eng { width: 32px; margin-left: 15px; text-align: center; font-size: 17px; }
.clock { width: 100px; margin-left: 18px; text-align: center; font-size: 18px; line-height: 27px; }
.tc-n { margin-left: 19px; margin-right: 32px; }
```
